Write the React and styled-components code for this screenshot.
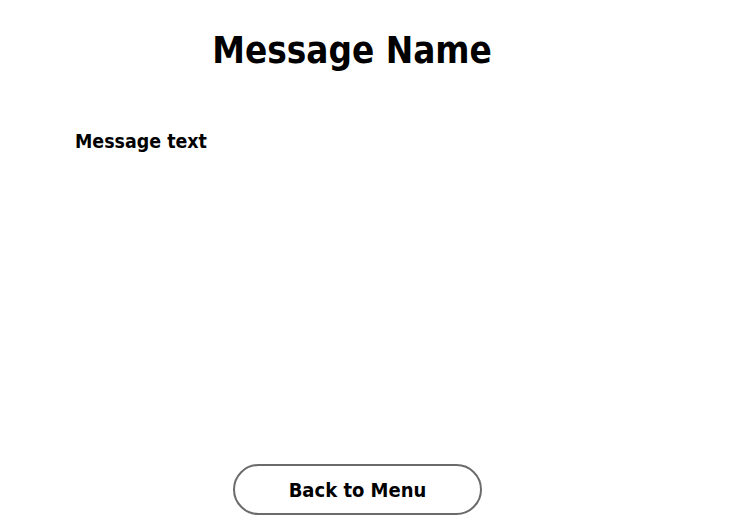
import styled, { createGlobalStyle } from "styled-components";

const GlobalStyle = createGlobalStyle`
    html, body {
        margin: 0;
        padding: 0;
        background: #ffffff;
    }
    body {
        font-family: Tahoma, "DejaVu Sans Condensed", "DejaVu Sans", sans-serif;
        color: #000000;
    }
`;

export default function App(){
    return(
        <>
            <GlobalStyle/>
            <Page>
                <Titulo>Message Name</Titulo>
                <Corpo>
                    <Texto>Message text</Texto>
                </Corpo>
                <BotaoContainer>
                    <Botao type="button">Back to Menu</Botao>
                </BotaoContainer>
            </Page>
        </>
    );
}

const Page = styled.div`
    width: 704px;
    height: 530px;
    display: flex;
    flex-direction: column;
    box-sizing: border-box;
    padding-top: 31px;
`;

const Titulo = styled.h1`
    margin: 0;
    text-align: center;
    font-size: 36.5px;
    font-weight: 700;
    line-height: 40px;
`;

const Corpo = styled.div`
    flex: 1;
    padding: 59px 0 0 75px;
`;

const Texto = styled.p`
    margin: 0;
    font-size: 19.4px;
    font-weight: 700;
    line-height: 24px;
`;

const BotaoContainer = styled.div`
    display: flex;
    justify-content: center;
    padding: 0 0 15px 11px;
`;

const Botao = styled.button`
    width: 249px;
    height: 51px;
    background: #ffffff;
    border: 2px solid #6b6b6b;
    border-radius: 26px;
    font-family: inherit;
    font-size: 20px;
    font-weight: 700;
    color: #000000;
    cursor: pointer;
`;
